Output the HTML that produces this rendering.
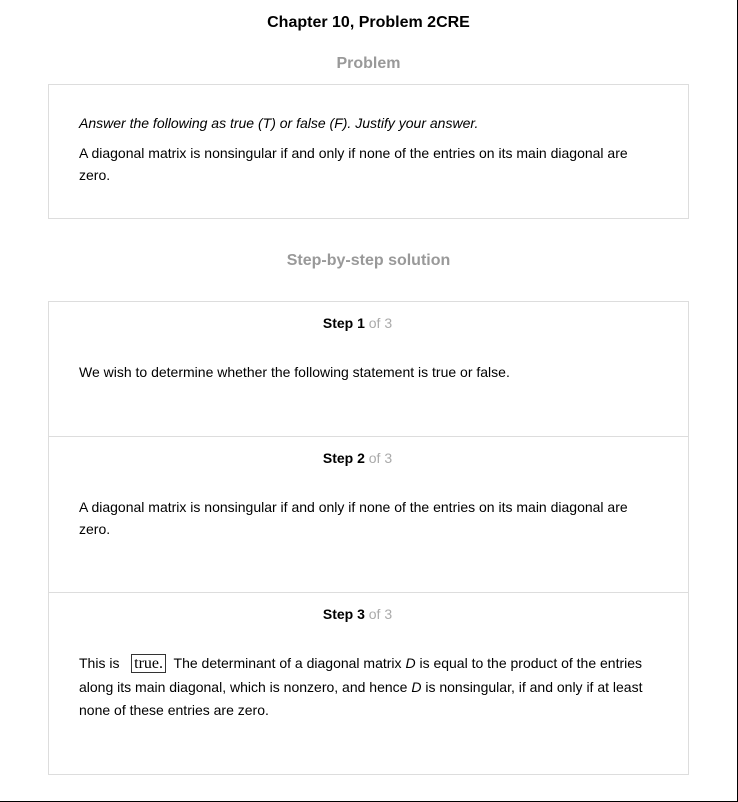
<!DOCTYPE html>
<html><head><style>
html,body{margin:0;padding:0}
body{width:737px;height:801px;border-right:1px solid #000;border-bottom:1px solid #000;font-family:"Liberation Sans",Arial,sans-serif;color:#000;background:#fff;position:relative;overflow:hidden}
.a{position:absolute}
.box{position:absolute;left:48px;width:639px;border:1px solid #ddd}
.t{position:absolute;left:79px;font-size:14px;line-height:22px}
.step{position:absolute;left:0;width:715px;text-align:center;font-size:14px;font-weight:bold}
.step span{color:#aaa;font-weight:normal}
.hr{position:absolute;left:49px;width:639px;height:1px;background:#ddd}
</style></head><body>
<div class="a" style="left:0;width:737px;top:14px;text-align:center;font-size:16px;font-weight:bold">Chapter 10, Problem 2CRE</div>
<div class="a" style="left:0;width:737px;top:55px;text-align:center;font-size:16px;font-weight:bold;color:#999">Problem</div>
<div class="box" style="top:84px;height:133px"></div>
<div class="t" style="top:112px;font-style:italic;font-size:14px">Answer the following as true (T) or false (F). Justify your answer.</div>
<div class="t" style="top:142px;width:580px">A diagonal matrix is nonsingular if and only if none of the entries on its main diagonal are zero.</div>
<div class="a" style="left:0;width:737px;top:252px;text-align:center;font-size:16px;font-weight:bold;color:#999">Step-by-step solution</div>
<div class="box" style="top:301px;height:472px"></div>
<div class="step" style="top:315px">Step 1 <span>of 3</span></div>
<div class="t" style="top:361px">We wish to determine whether the following statement is true or false.</div>
<div class="hr" style="top:436px"></div>
<div class="step" style="top:450px">Step 2 <span>of 3</span></div>
<div class="t" style="top:496px;width:580px">A diagonal matrix is nonsingular if and only if none of the entries on its main diagonal are zero.</div>
<div class="hr" style="top:592px"></div>
<div class="step" style="top:606px">Step 3 <span>of 3</span></div>
<div class="t" style="top:652px;width:590px;line-height:23.5px">This is &nbsp;&nbsp;<span style="font-family:'Liberation Serif',serif;font-size:16px;border:1px solid #333;padding:0 2px">true.</span>&nbsp; The determinant of a diagonal matrix <i>D</i> is equal to the product of the entries along its main diagonal, which is nonzero, and hence <i>D</i> is nonsingular, if and only if at least none of these entries are zero.</div>
</body></html>
